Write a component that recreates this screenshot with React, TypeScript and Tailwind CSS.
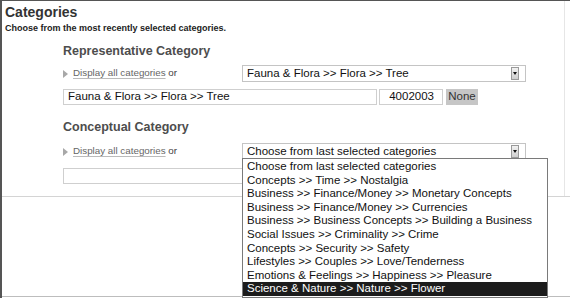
import { ReactNode } from 'react'

const lastSelected = [
  'Choose from last selected categories',
  'Concepts >> Time >> Nostalgia',
  'Business >> Finance/Money >> Monetary Concepts',
  'Business >> Finance/Money >> Currencies',
  'Business >> Business Concepts >> Building a Business',
  'Social Issues >> Criminality >> Crime',
  'Concepts >> Security >> Safety',
  'Lifestyles >> Couples >> Love/Tenderness',
  'Emotions & Feelings >> Happiness >> Pleasure',
  'Science & Nature >> Nature >> Flower',
]

function Arrow() {
  return (
    <span className="flex h-[13px] w-[8px] items-center justify-center border border-[#9a9a9a] bg-gradient-to-b from-[#f2f2f2] to-[#cfcfcf]">
      <svg width="4" height="3" viewBox="0 0 4 3">
        <path d="M0 0h4L2 3z" fill="#111" />
      </svg>
    </span>
  )
}

function FakeSelect({ value, children }: { value: string; children?: ReactNode }) {
  return (
    <div className="relative">
      <div className="flex h-[17px] w-[284px] items-center justify-between border border-[#c4c4c4] bg-white pl-[4px] pr-[6px] text-[11.5px] leading-none text-[#111]">
        <span>{value}</span>
        <Arrow />
      </div>
      {children}
    </div>
  )
}

function DisplayAll() {
  return (
    <div className="flex w-[179px] items-center gap-[5px] text-[9.8px] text-[#666]">
      <svg width="5" height="8" viewBox="0 0 5 8">
        <path d="M0 0l5 4-5 4z" fill="#a8a8a8" />
      </svg>
      <span>
        <span className="underline decoration-[#bbb] underline-offset-2">Display all categories</span>{' '}
        <span className="text-[#444]">or</span>
      </span>
    </div>
  )
}

export default function App() {
  return (
    <div className="h-[298px] w-[570px] overflow-hidden border-l-2 border-t border-[#555] bg-white font-['Liberation_Sans',Arial,sans-serif]">
      <div className="h-[196px] border-b border-[#d4d4d4]">
        <div className="h-full w-[563px] border-r border-[#e6e6e6]">
          <h1 className="pl-[3px] pt-[3px] text-[14px] font-bold leading-[16px] text-[#333]">Categories</h1>
          <p className="mt-[3px] pl-[3px] text-[9px] font-bold leading-[11px] text-[#222]">
            Choose from the most recently selected categories.
          </p>

          <div className="pl-[61px]">
            <h2 className="mt-[10px] text-[12.5px] font-bold leading-[15px] text-[#4d4d4d]">Representative Category</h2>
            <div className="mt-[6px] flex items-center">
              <DisplayAll />
              <FakeSelect value="Fauna & Flora >> Flora >> Tree" />
            </div>
            <div className="mt-[7px] flex items-center gap-[2px] text-[11.5px] leading-none text-[#111]">
              <div className="flex h-[16px] w-[314px] items-center border border-[#cfcfcf] pl-[4px]">
                Fauna &amp; Flora &gt;&gt; Flora &gt;&gt; Tree
              </div>
              <div className="flex h-[16px] w-[64px] items-center justify-end border border-[#cfcfcf] pr-[8px]">4002003</div>
              <div className="ml-[1px] flex h-[16px] w-[32px] items-center justify-center bg-[#c6c6c6] text-[#333]">None</div>
            </div>

            <h2 className="mt-[15px] text-[12.5px] font-bold leading-[15px] text-[#4d4d4d]">Conceptual Category</h2>
            <div className="mt-[8px] flex items-center">
              <DisplayAll />
              <FakeSelect value="Choose from last selected categories">
                <ul className="absolute left-0 top-full z-10 -mt-[2px] w-[306px] border border-[#7a7a7a] bg-white py-px text-[11.5px] text-[#111]">
                  {lastSelected.map((item, i) => (
                    <li
                      key={item}
                      className={
                        i === lastSelected.length - 1
                          ? 'h-[13.6px] bg-[#1c1c1c] pl-[4px] leading-[13.6px] text-white'
                          : 'h-[13.6px] pl-[4px] leading-[13.6px]'
                      }
                    >
                      {item}
                    </li>
                  ))}
                </ul>
              </FakeSelect>
            </div>
            <div className="mt-[8px] h-[16px] w-[300px] border border-[#cfcfcf]" />
          </div>
        </div>
      </div>
      <div className="h-[100px] border-b border-[#bdbdbd]" />
    </div>
  )
}
